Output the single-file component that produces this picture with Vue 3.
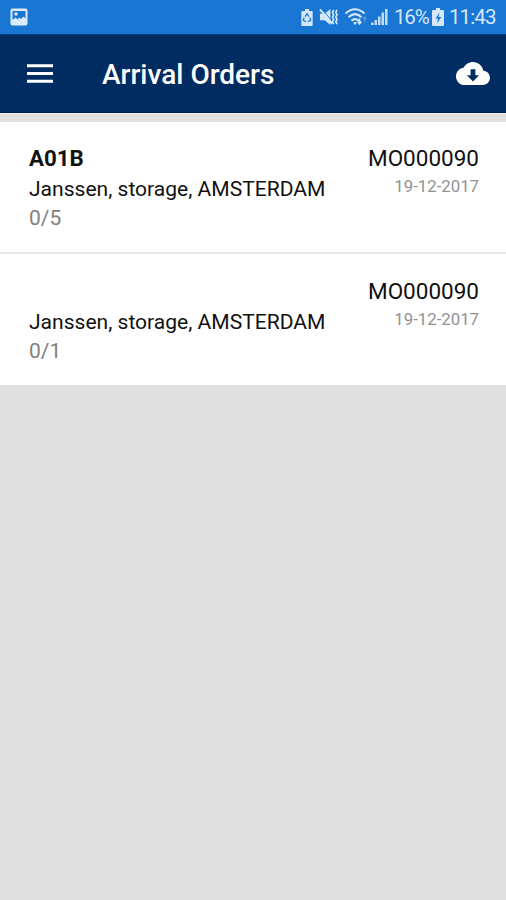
<script setup>
const orders = [
  { code: 'A01B', place: 'Janssen, storage, AMSTERDAM', count: '0/5', number: 'MO000090', date: '19-12-2017' },
  { code: '', place: 'Janssen, storage, AMSTERDAM', count: '0/1', number: 'MO000090', date: '19-12-2017' },
]
</script>

<template>
  <div class="screen">
    <div class="status">
      <svg class="picture" viewBox="0 0 18 18">
        <rect x="0.5" y="0.5" width="17" height="17" rx="2" fill="#dcebfb" />
        <path d="M2.500 3h13v7.500l-2-2-2.500 2.500-1.500-1.500-2 2-2-2-3 2.500z" fill="#1976d2" />
        <circle cx="6" cy="6" r="1.700" fill="#dcebfb" />
      </svg>
      <div class="indicators">
        <svg class="saver" viewBox="0 0 12 18" fill="#d5e7fa">
          <path d="M4 0h4v2h3q1 0 1 1v14q0 1-1 1H1q-1 0-1-1V3q0-1 1-1h3z" />
          <path d="M4 8l2-3 2 3M9 9l1 3-3 1.500M5 13.500L2 12l1-3" fill="none" stroke="#1976d2" stroke-width="1.300" />
        </svg>
        <svg class="mute" viewBox="0 0 20 18" fill="#d5e7fa">
          <path d="M1 5.500h5l6-5v17l-6-5H1z" />
          <path d="M2.500 0l12.500 14.500" stroke="#1976d2" stroke-width="1" />
          <path d="M1 1l13 15" stroke="#d5e7fa" stroke-width="2" />
          <path d="M15.500 1.500l-1.300 2.500 1.300 2.500-1.300 2.500 1.300 2.500-1.300 2.500 1.300 2.500M19 1.500l-1.300 2.500L19 6.500l-1.300 2.500 1.300 2.500-1.300 2.500L19 16.500" fill="none" stroke="#d5e7fa" stroke-width="1.700" />
        </svg>
        <svg class="wifi" viewBox="0 0 22 18" fill="none" stroke="#d5e7fa" stroke-width="2.100">
          <path d="M0.500 5.500q9.500-8.500 19 0M3.500 9.200q6.500-6 13 0M6.500 12.700q3.500-3.200 7 0" />
          <path d="M8 14.800q2-1.800 4 0l-2 2.200z" fill="#d5e7fa" stroke="none" />
          <path d="M14.500 10.500v5m-1.800-2l1.800 2.500 1.800-2.500" stroke-width="1.600" />
          <path d="M19.700 14V9m-1.600 2l1.600-2 1.600 2" stroke="#5a9fe2" stroke-width="1.200" />
        </svg>
        <svg class="signal" viewBox="0 0 17 18" fill="#c2dcf7">
          <path d="M0 14.500h2.500V17H0zM3.500 12h2.500v5h-2.500zM7 8.500h2.500V17h-2.500zM10.500 4.500h2.500V17h-2.500zM14 1h2.500v16H14z" />
        </svg>
        <span class="percent">16%</span>
        <svg class="battery" viewBox="0 0 12 18">
          <path d="M4 0h4v2h3q1 0 1 1v14q0 1-1 1H1q-1 0-1-1V3q0-1 1-1h3z" fill="#d5e7fa" />
          <path d="M7.500 4.500L3.500 10.500h2.500L5 15.500l4.300-6.500H6.500z" fill="#1976d2" />
        </svg>
        <span class="time">11:43</span>
      </div>
    </div>

    <header class="bar">
      <svg class="menu" viewBox="0 0 27 20" fill="#fff">
        <path d="M0 0h27v3H0zM0 8h27v3H0zM0 16h27v3H0z" />
      </svg>
      <h1>Arrival Orders</h1>
      <svg class="cloud" viewBox="0 4 24 16" preserveAspectRatio="none" fill="#fff">
        <path d="M19.350 10.040C18.670 6.590 15.640 4 12 4 9.110 4 6.600 5.640 5.350 8.040 2.340 8.360 0 10.910 0 14c0 3.310 2.690 6 6 6h13c2.760 0 5-2.240 5-5 0-2.640-2.050-4.780-4.650-4.960zM16.300 13.200L12 17.500l-4.300-4.300h2.600V9h3.400v4.200z" />
      </svg>
    </header>

    <main class="list">
      <article v-for="(order, i) in orders" :key="i" class="order">
        <div class="left">
          <div class="code">{{ order.code }}</div>
          <div class="place">{{ order.place }}</div>
          <div class="count">{{ order.count }}</div>
        </div>
        <div class="right">
          <div class="number">{{ order.number }}</div>
          <div class="date">{{ order.date }}</div>
        </div>
      </article>
    </main>
  </div>
</template>

<style>
body {
  margin: 0;
  background: #e0e0e0;
}
</style>

<style scoped>
.screen {
  height: 900px;
  overflow: hidden;
  background: #e0e0e0;
  font-family: Roboto, sans-serif;
  white-space: nowrap;
}
svg {
  display: block;
  flex: none;
}
.status {
  box-sizing: border-box;
  height: 34px;
  padding: 0 11px 0 10px;
  display: flex;
  align-items: center;
  justify-content: space-between;
  background: #1976d2;
  color: #d5e7fa;
}
.picture {
  width: 18px;
  height: 18px;
}
.indicators {
  display: flex;
  align-items: center;
  font-size: 20px;
  line-height: 34px;
}
.saver {
  width: 12px;
  height: 17px;
}
.mute {
  width: 19px;
  height: 18px;
  margin-left: 6px;
}
.wifi {
  width: 22px;
  height: 18px;
  margin-left: 7px;
}
.signal {
  width: 17px;
  height: 18px;
  margin-left: 4px;
}
.percent {
  width: 34px;
  margin-left: 6px;
  font-size: 20.5px;
  line-height: 35px;
  letter-spacing: -1.2px;
}
.battery {
  width: 12px;
  height: 18px;
  margin-left: 4px;
}
.time {
  width: 46px;
  margin-left: 5px;
  font-size: 20.5px;
  line-height: 35px;
  letter-spacing: -0.9px;
}
.bar {
  box-sizing: border-box;
  height: 79px;
  padding: 0 16px 0 27px;
  display: flex;
  align-items: center;
  background: #002c62;
  border-top: 1px solid #07427f;
  border-bottom: 1px solid #001c50;
}
.menu {
  width: 26px;
  height: 20px;
}
h1 {
  flex: 1;
  margin: 2px 0 0 49px;
  color: #fff;
  font-size: 28px;
  line-height: 36px;
  font-weight: 500;
}
.cloud {
  width: 34px;
  height: 23px;
}
.list {
  border-top: 1px solid #f2f2f2;
  padding-top: 8px;
}
.order {
  box-sizing: border-box;
  padding: 21px 27px 0 29px;
  display: flex;
  justify-content: space-between;
  background: #fff;
  color: #111;
}
.order + .order {
  height: 133px;
  padding-top: 22px;
  border-top: 2px solid #e8e8e8;
}
.order:first-child {
  height: 130px;
}
.code {
  height: 30px;
  line-height: 30px;
  font-size: 22.3px;
  font-weight: 700;
}
.place {
  height: 29px;
  line-height: 31px;
  font-size: 21.05px;
}
.count {
  line-height: 33px;
  font-size: 21px;
  color: #808080;
}
.right {
  text-align: right;
}
.number {
  height: 30px;
  line-height: 30px;
  font-size: 22.5px;
}
.date {
  line-height: 26px;
  font-size: 16.8px;
  color: #929292;
}
</style>
